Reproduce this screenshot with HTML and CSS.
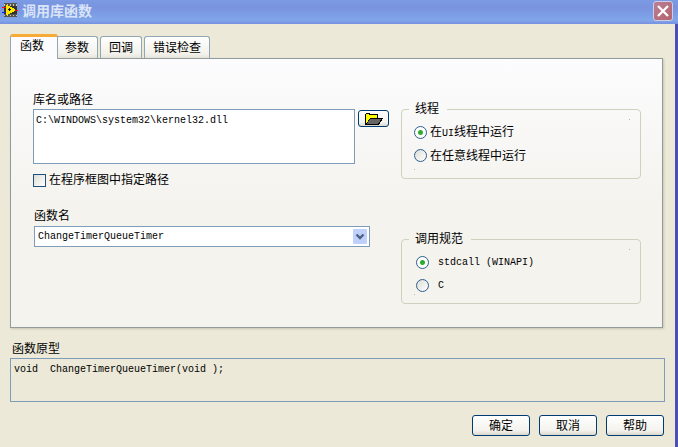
FILE: index.html
```
<!DOCTYPE html>
<html lang="zh-CN">
<head>
<meta charset="utf-8">
<title>调用库函数</title>
<link rel="stylesheet" href="styles.css">
</head>
<body>
<main class="window">
  <header class="titlebar">
    <svg class="app-icon" viewBox="0 0 18 16" shape-rendering="crispEdges" aria-hidden="true">
      <rect x="2" y="0" width="13" height="14" fill="#55554a"/>
      <path d="M2 1h1v2h-1zM5 1h1v2h-1zM8 1h1v2h-1zM11 1h1v2h-1zM14 1h1v2h-1zM2 12h1v1h-1zM5 12h1v1h-1zM8 12h1v1h-1zM11 12h1v1h-1zM14 12h1v1h-1z" fill="#c8c8b8"/>
      <rect x="2" y="3" width="13" height="8" fill="#33332c"/>
      <path d="M0 4h4v1h-4zM12 7h4v1h-4z" fill="#f01010"/>
      <path d="M0 9h4v1h-4z" fill="#1020e0"/>
      <path d="M4 2h2v1h2v1h2v1h2v1h1v2h-1v1h-2v1h-2v1h-2v1h-2z" fill="#ffe800"/>
      <path d="M7 5h1v1h1v1h-1v1h-1v-1h-1v-1h1z" fill="#101010"/>
    </svg>
    <h1 class="title">调用库函数</h1>
    <button class="close" type="button" aria-label="关闭">
      <svg viewBox="0 0 12 12" aria-hidden="true"><path d="M1 1L11 11M11 1L1 11" stroke="#fff" stroke-width="2.3"/></svg>
    </button>
  </header>

  <div class="client">
    <div class="tabs" role="tablist">
      <button class="tab tab-active" type="button" role="tab" aria-selected="true">函数</button>
      <button class="tab" type="button" role="tab" aria-selected="false">参数</button>
      <button class="tab" type="button" role="tab" aria-selected="false">回调</button>
      <button class="tab" type="button" role="tab" aria-selected="false">错误检查</button>
    </div>

    <section class="panel" role="tabpanel">
      <div class="fields">
        <label class="caption" for="path">库名或路径</label>
        <div class="path-row">
          <textarea class="path mono" id="path" spellcheck="false">C:\WINDOWS\system32\kernel32.dll</textarea>
          <button class="button browse" type="button" aria-label="浏览">
            <svg viewBox="0 0 18 12" shape-rendering="crispEdges" aria-hidden="true">
              <path d="M0 1h1v-1h4v1h8v4h5v1h-1v2h-1v1h-1v2h-1v1h-14z" fill="#000"/>
              <path d="M1 1h3v1h8v3h-7v1h-1v1h-1v2h-1v1h-1z" fill="#ff0"/>
              <path d="M5 6h11v1h-1v2h-1v1h-1v1h-11v-1h1v-2h1v-1h1z" fill="#666"/>
            </svg>
          </button>
        </div>
        <label class="check"><input type="checkbox">在程序框图中指定路径</label>
        <label class="caption name-caption" for="name">函数名</label>
        <div class="combo">
          <select class="mono" id="name"><option>ChangeTimerQueueTimer</option></select>
          <svg class="combo-arrow" viewBox="0 0 14 15" aria-hidden="true">
            <rect width="14" height="15" rx="1" class="arrow-face"/>
            <path d="M3.500 5.500L7 9L10.500 5.500" fill="none" stroke="#4d6185" stroke-width="2.400"/>
          </svg>
        </div>
      </div>

      <div class="groups">
        <fieldset class="group">
          <legend>线程</legend>
          <label class="radio"><input type="radio" name="thread" checked><span>在<span class="mono">UI</span>线程中运行</span></label>
          <label class="radio"><input type="radio" name="thread"><span>在任意线程中运行</span></label>
        </fieldset>
        <fieldset class="group convention">
          <legend>调用规范</legend>
          <label class="radio"><input type="radio" name="convention" checked><span class="mono">stdcall (WINAPI)</span></label>
          <label class="radio"><input type="radio" name="convention"><span class="mono">C</span></label>
        </fieldset>
      </div>
    </section>

    <label class="caption prototype-caption" for="prototype">函数原型</label>
    <output class="prototype mono" id="prototype">void  ChangeTimerQueueTimer(void );</output>

    <footer class="actions">
      <button class="button" type="button">确定</button>
      <button class="button" type="button">取消</button>
      <button class="button" type="button">帮助</button>
    </footer>
  </div>
</main>
</body>
</html>
```
FILE: styles.css
```
* {
  box-sizing: border-box;
}

body {
  margin: 0;
  background: #ece9d8;
  color: #000;
  font: 12px/16px "Liberation Sans", "Noto Sans CJK SC", sans-serif;
}

button, select, textarea {
  margin: 0;
  color: inherit;
  font: inherit;
}

.mono {
  font-family: "Liberation Mono", monospace;
  font-size: 10px;
}

.window {
  min-height: 100vh;
  display: flex;
  flex-direction: column;
}

.titlebar {
  height: 24px;
  display: flex;
  align-items: center;
  padding: 0 5px 2px 2px;
  background: linear-gradient(#7b9be4, #7a93df 30%, #7c9fe6 65%, #82a6e9 85%, #7690df);
}

.app-icon {
  width: 18px;
  height: 16px;
}

.title {
  flex: 1;
  margin: 0 0 0 2px;
  color: #dae4f8;
  font-size: 14px;
  line-height: 20px;
}

.close {
  width: 20px;
  height: 20px;
  display: grid;
  place-items: center;
  padding: 0;
  border: 1px solid #cdcdea;
  border-radius: 3px;
  background: linear-gradient(135deg, #b97f98, #b4646c);
}

.close svg {
  width: 12px;
  height: 12px;
}

.client {
  flex: 1;
  padding: 10px;
  border-right: 3px solid;
  border-image: linear-gradient(90deg, #7482dc, #4a50b4) 1;
  border-image-width: 0 3px 0 0;
}

.tabs {
  display: flex;
  align-items: flex-end;
  gap: 2px;
}

.tab {
  height: 22px;
  padding: 0 8px;
  border: 1px solid #91a7b4;
  border-bottom: 0;
  border-radius: 3px 3px 0 0;
  background: linear-gradient(#fff, #f2f1ea 80%, #e6e4da);
}

.tab-active {
  position: relative;
  height: 25px;
  margin: 0 -4px -1px 0;
  padding: 0 13px 4px 9px;
  border-top: 3px solid #f5ab36;
  background: #fcfcfe;
}

.panel {
  display: flex;
  align-items: flex-start;
  min-height: 270px;
  margin-right: 2px;
  padding: 33px 21px 23px 22px;
  border: 1px solid #919b9c;
  background: linear-gradient(#fcfcfe, #f4f3ee 55%, #f4f3ee);
  box-shadow: 1px 1px 2px #c9c5b0;
}

.fields {
  flex: 1;
  display: flex;
  flex-direction: column;
  align-items: flex-start;
}

.caption {
  line-height: 16px;
}

.path-row {
  width: 100%;
  display: flex;
  align-items: flex-start;
  gap: 3px;
  margin-top: 1px;
}

.path {
  flex: 1;
  height: 55px;
  padding: 4px 2px;
  border: 1px solid #7f9db9;
  background: #fff;
  line-height: 14px;
  resize: none;
}

.button {
  width: 58px;
  height: 21px;
  padding: 0;
  border: 1px solid #003c74;
  border-radius: 3px;
  background: linear-gradient(#fff, #f4f3ee 75%, #dcd8cc);
}

.browse {
  width: 31px;
  height: 17px;
  display: grid;
  place-items: center;
  margin: 1px 12px 0 0;
}

.browse svg {
  width: 18px;
  height: 12px;
}

.check {
  display: flex;
  align-items: center;
  gap: 3px;
  margin-top: 8px;
}

.check input {
  appearance: none;
  width: 13px;
  height: 13px;
  margin: 0;
  border: 1px solid #1c5180;
  background: linear-gradient(135deg, #dcdcd7, #fff);
}

.name-caption {
  margin: 20px 0 2px 1px;
}

.combo {
  position: relative;
  width: 336px;
  max-width: 100%;
  margin-left: 1px;
}

.combo select {
  appearance: none;
  display: block;
  width: 100%;
  height: 21px;
  padding: 1px 20px 0 3px;
  border: 1px solid #7f9db9;
  border-radius: 0;
  background: #fff;
}

.combo-arrow {
  position: absolute;
  top: 3px;
  right: 3px;
  width: 14px;
  height: 15px;
  pointer-events: none;
}

.arrow-face {
  fill: #bfd1fb;
}

.groups {
  width: 240px;
}

.group {
  margin: 9px 0 0;
  padding: 4px 7px 11px;
  border: 1px solid #d0d0bf;
  border-radius: 4px;
  background:
    linear-gradient(#b4b4a8, #b4b4a8) right 10px top 9px / 1px 1px no-repeat,
    linear-gradient(#b4b4a8, #b4b4a8) left 12px bottom 8px / 1px 1px no-repeat;
}

.group legend {
  padding: 0 8px 0 6px;
}

.radio {
  display: flex;
  align-items: center;
  gap: 3px;
  height: 23px;
  padding-left: 5px;
}

.radio input {
  appearance: none;
  width: 13px;
  height: 13px;
  margin: 0;
  border: 1px solid #2c5f8e;
  border-radius: 50%;
  background: linear-gradient(135deg, #dcdcd7, #fff);
}

.radio input:checked {
  background: radial-gradient(circle, #2cae2c 0 2px, #fff 3px);
}

.convention {
  margin-top: 52px;
  padding-bottom: 6px;
}

.convention .radio {
  gap: 9px;
  padding-left: 7px;
}

.prototype-caption {
  display: block;
  margin: 13px 0 1px 2px;
}

.prototype {
  display: block;
  min-height: 44px;
  padding: 4px 3px;
  border: 1px solid #7f9db9;
  line-height: 14px;
  white-space: pre-wrap;
}

.actions {
  display: flex;
  justify-content: flex-end;
  gap: 9px;
  margin-top: 13px;
  padding-right: 1px;
}
```
